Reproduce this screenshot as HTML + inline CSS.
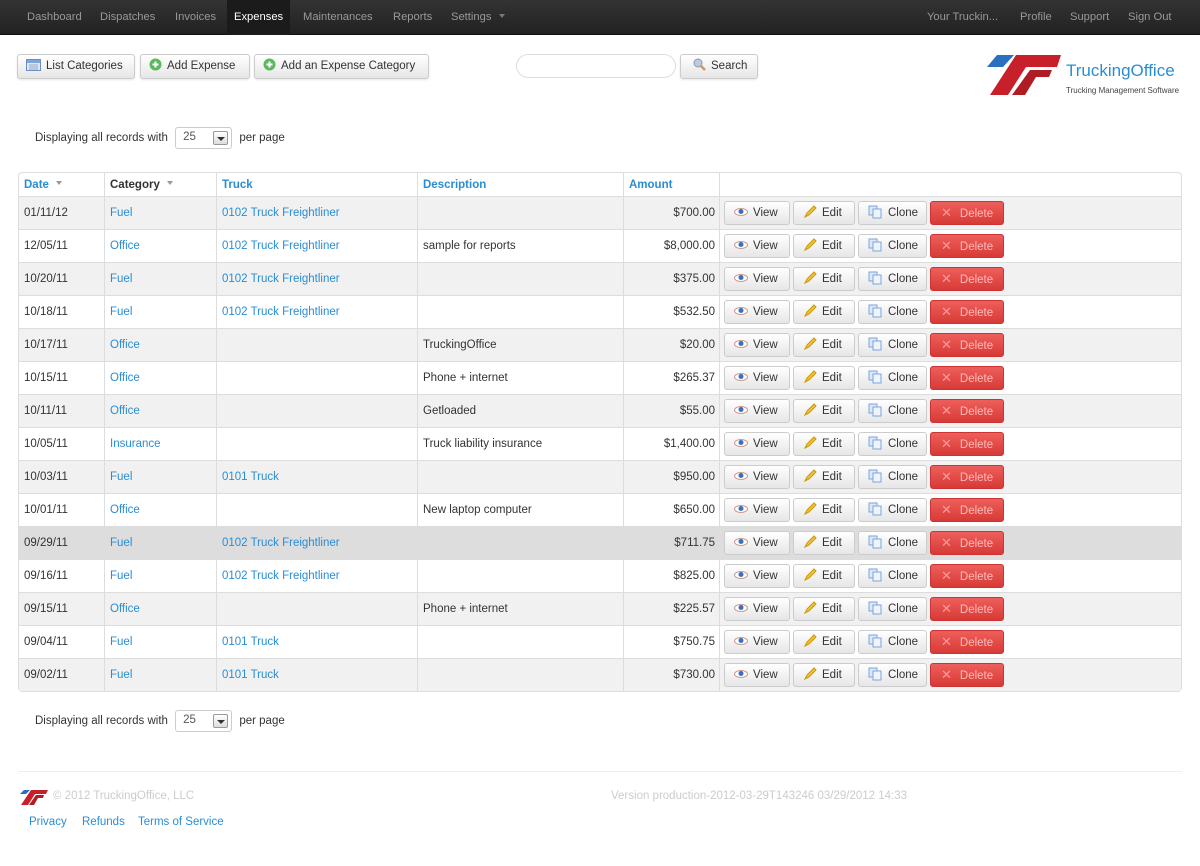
<!DOCTYPE html>
<html><head><meta charset="utf-8"><style>
*{box-sizing:border-box}
body{margin:0;width:1200px;height:866px;background:#fff;font-family:"Liberation Sans",sans-serif;font-size:11.5px;color:#333;position:relative;overflow:hidden}
a{color:#2a8dd4;text-decoration:none}
.nav{position:absolute;left:0;top:0;width:1200px;height:35px;background:linear-gradient(#333,#222);border-bottom:1px solid #111}
.nav span{position:absolute;top:11px;color:#999;font-size:11.2px}
.nav .act{background:#1b1b1b;color:#fff;top:0;height:35px;line-height:35px;padding:0 7px}
.btn{position:absolute;height:25px;border:1px solid #ccc;border-radius:3px;background:linear-gradient(#fff,#e6e6e6);color:#333;font-size:11.5px;line-height:23px;padding:0 8px;box-shadow:0 1px 2px rgba(0,0,0,.1);white-space:nowrap}
.ico{display:inline-block;vertical-align:middle;margin-right:5px;margin-top:-2px}
.disp{position:absolute;left:35px;font-size:11.5px;color:#333}
.sel{display:inline-block;vertical-align:middle;width:57px;height:22px;border:1px solid #ccc;border-radius:3px;margin:0 4px;position:relative;color:#555;padding:3px 0 0 7px}
.sel i{position:absolute;right:3px;top:3px;width:15px;height:14px;border:1px solid #999;border-radius:2px;background:linear-gradient(#fff,#ddd)}
.sel i:after{content:"";position:absolute;left:3px;top:5px;border:4px solid transparent;border-top:4px solid #333;border-bottom:0}
table{position:absolute;left:18px;top:172px;width:1164px;border-collapse:separate;border-spacing:0;border:1px solid #ddd;border-radius:4px}
td,th{height:33px;padding:0 5px;border-left:1px solid #ddd;border-top:1px solid #ddd;white-space:nowrap;font-size:11.5px}
td:first-child,th:first-child{border-left:0}
th{height:23px;border-top:0;text-align:left;font-weight:bold;color:#2a8dd4}
th .c{color:#333}
tr.o td{background:#f1f1f1}
tr.h td{background:#ddd}
td.amt{text-align:right;padding-right:4px}
td.act{padding-left:4px;font-size:0}
.ab{position:relative;display:inline-block;height:24px;border:1px solid #ccc;border-radius:3px;background:linear-gradient(#fff,#e6e6e6);color:#333;line-height:22px;vertical-align:middle;margin-right:3px;padding:0 0 0 9px;font-size:11.5px}
.ab.d{background:linear-gradient(#ee5f5b,#d73a36);border-color:#c33;color:#fbb}
.car{display:inline-block;border:3px solid transparent;border-top:4px solid #999;margin-left:4px;vertical-align:middle}
</style></head><body>
<div class="nav">
<span style="left:27px">Dashboard</span><span style="left:100px">Dispatches</span><span style="left:175px">Invoices</span>
<span class="act" style="left:227px">Expenses</span><span style="left:303px">Maintenances</span><span style="left:393px">Reports</span><span style="left:451px">Settings <i class="car" style="border-top-color:#777"></i></span>
<span style="left:927px">Your Truckin...</span><span style="left:1020px">Profile</span><span style="left:1070px">Support</span><span style="left:1128px">Sign Out</span>
</div>

<div class="btn" style="left:17px;top:54px;width:118px"><svg class="ico" width="15" height="12"><rect x=".5" y=".5" width="14" height="11" fill="#dbe8f7" stroke="#6b8fc4"/><rect x="1" y="1" width="13" height="3" fill="#7da4dc"/><path d="M3 6h9M3 8h9M3 10h9" stroke="#9ab"/></svg>List Categories</div>
<div class="btn" style="left:140px;top:54px;width:110px"><svg class="ico" width="13" height="13"><circle cx="6.5" cy="6.5" r="6" fill="#5cb85c"/><path d="M6.5 3.5v6M3.5 6.5h6" stroke="#fff" stroke-width="2"/></svg>Add Expense</div>
<div class="btn" style="left:254px;top:54px;width:175px"><svg class="ico" width="13" height="13"><circle cx="6.5" cy="6.5" r="6" fill="#5cb85c"/><path d="M6.5 3.5v6M3.5 6.5h6" stroke="#fff" stroke-width="2"/></svg>Add an Expense Category</div>

<div style="position:absolute;left:516px;top:54px;width:160px;height:24px;border:1px solid #ddd;border-radius:12px"></div>
<div class="btn" style="left:680px;top:54px;width:78px;padding-left:12px"><svg class="ico" width="13" height="13"><circle cx="5" cy="5" r="4" fill="#bcd" stroke="#89a"/><path d="M8 8l4 4" stroke="#c96" stroke-width="2.5"/></svg>Search</div>

<svg style="position:absolute;left:980px;top:50px" width="90" height="50">
<polygon points="17,5 34,5 23,17 7,17" fill="#2a6fc0"/>
<polygon points="36,5 81,5 77,17 46,17 28,45 10,45" fill="#c8202a"/>
<polygon points="50,20 72,20 69,27 56,27 45,45 32,45" fill="#b01c24"/>
</svg>
<div style="position:absolute;left:1066px;top:61px;font-size:17px;color:#2a8dd4">TruckingOffice</div>
<div style="position:absolute;left:1066px;top:86px;font-size:8px;color:#444">Trucking Management Software</div>

<div class="disp" style="top:127px">Displaying all records with <span class="sel">25<i></i></span> per page</div>

<table>
<tr><th style="width:85px">Date <i class="car"></i></th><th style="width:112px"><span class="c">Category</span> <i class="car"></i></th><th style="width:201px">Truck</th><th style="width:206px">Description</th><th style="width:96px">Amount</th><th></th></tr>
</table>
<div class="disp" style="top:710px">Displaying all records with <span class="sel">25<i></i></span> per page</div>

<div style="position:absolute;left:18px;top:771px;width:1164px;border-top:1px solid #eee"></div>
<svg style="position:absolute;left:18px;top:789px" width="32" height="18"><polygon points="6,1 12,1 8,5 2,5" fill="#2a6fc0"/><polygon points="13,1 30,1 28,5 17,5 10,16 3,16" fill="#c8202a"/><polygon points="18,6 26,6 25,9 20,9 16,16 11,16" fill="#b01c24"/></svg>
<div style="position:absolute;left:53px;top:790px;color:#ccc">© 2012 TruckingOffice, LLC</div>
<div style="position:absolute;left:611px;top:790px;color:#ccc">Version production-2012-03-29T143246 03/29/2012 14:33</div>
<div style="position:absolute;left:29px;top:816px"><a>Privacy</a></div>
<div style="position:absolute;left:82px;top:816px"><a>Refunds</a></div>
<div style="position:absolute;left:138px;top:816px"><a>Terms of Service</a></div>

<script>
var rows=[["01/11/12","Fuel","0102 Truck Freightliner","","$700.00"],["12/05/11","Office","0102 Truck Freightliner","sample for reports","$8,000.00"],["10/20/11","Fuel","0102 Truck Freightliner","","$375.00"],["10/18/11","Fuel","0102 Truck Freightliner","","$532.50"],["10/17/11","Office","","TruckingOffice","$20.00"],["10/15/11","Office","","Phone + internet","$265.37"],["10/11/11","Office","","Getloaded","$55.00"],["10/05/11","Insurance","","Truck liability insurance","$1,400.00"],["10/03/11","Fuel","0101 Truck","","$950.00"],["10/01/11","Office","","New laptop computer","$650.00"],["09/29/11","Fuel","0102 Truck Freightliner","","$711.75"],["09/16/11","Fuel","0102 Truck Freightliner","","$825.00"],["09/15/11","Office","","Phone + internet","$225.57"],["09/04/11","Fuel","0101 Truck","","$750.75"],["09/02/11","Fuel","0101 Truck","","$730.00"]];
var eye='<svg class="ico" width="14" height="10"><ellipse cx="7" cy="5" rx="6.5" ry="3.5" fill="#fff" stroke="#c98"/><circle cx="7" cy="4.5" r="2.5" fill="#3a6fc4"/></svg>';
var pen='<svg class="ico" width="14" height="14"><path d="M2 12l2-4 7-7 2 2-7 7z" fill="#f0c040" stroke="#c90"/></svg>';
var cl='<svg class="ico" width="15" height="14"><rect x="1" y="1" width="8" height="9" fill="#dbe8f7" stroke="#7da4dc"/><rect x="5" y="4" width="8" height="9" fill="#eef4fb" stroke="#7da4dc"/></svg>';
var x='<span style="color:#f99;font-size:13px;margin-right:8px">✕</span>';
var h='';
rows.forEach(function(r,i){var c=i==10?'h':(i%2==0?'o':'');
h+='<tr class="'+c+'"><td>'+r[0]+'</td><td><a>'+r[1]+'</a></td><td><a>'+r[2]+'</a></td><td>'+r[3]+'</td><td class="amt">'+r[4]+'</td><td class="act"><span class="ab" style="width:66px">'+eye+'View</span><span class="ab" style="width:62px">'+pen+'Edit</span><span class="ab" style="width:69px">'+cl+'Clone</span><span class="ab d" style="width:74px;padding-left:10px">'+x+'Delete</span></td></tr>';});
document.querySelector('table tbody').insertAdjacentHTML('beforeend',h);
</script>
</body></html>
